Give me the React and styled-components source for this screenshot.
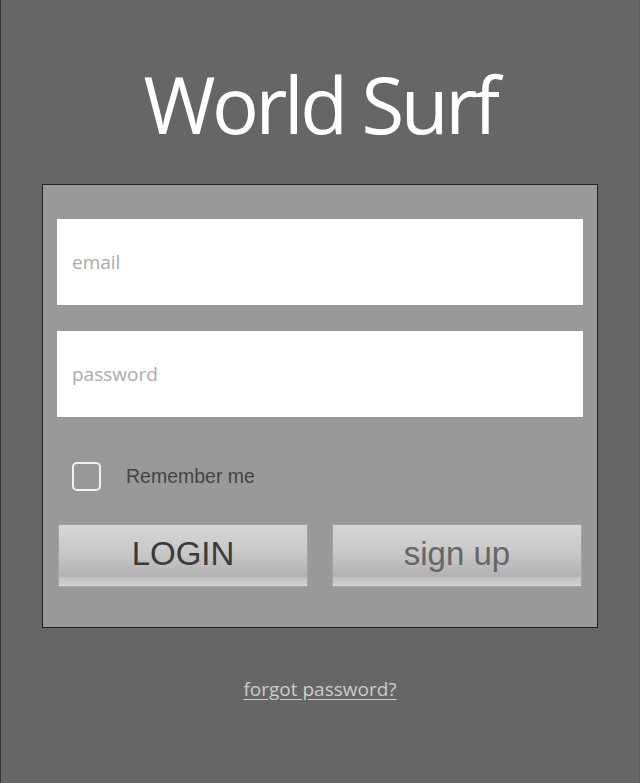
import React from 'react'
import styled, { createGlobalStyle } from 'styled-components'

const Global = createGlobalStyle`
  html, body {
    margin: 0;
    padding: 0;
    background: #666666;
  }
  * { box-sizing: border-box; }
`

const Page = styled.div`
  min-height: 783px;
  background: #666666;
  border-left: 1px solid #333333;
  border-right: 1px solid #5c5c5c;
  display: flex;
  flex-direction: column;
  align-items: center;
  padding-top: 65px;
`

const Title = styled.h1`
  margin: 0;
  font-family: "Open Sans", sans-serif;
  font-weight: 400;
  font-size: 78px;
  line-height: 78px;
  letter-spacing: -3.4px;
  color: #ffffff;
`

const Card = styled.div`
  margin-top: 41px;
  width: 556px;
  background: #999999;
  border: 1px solid #222222;
  padding: 34px 14px 40px;
  display: flex;
  flex-direction: column;
`

const Field = styled.input`
  display: block;
  width: 100%;
  height: 86px;
  border: none;
  outline: none;
  background: #ffffff;
  padding: 0 15px;
  font-family: "Open Sans", sans-serif;
  font-size: 19px;
  color: #555;
  margin-bottom: ${p => p.$gap || 0}px;

  &::placeholder {
    color: #ababab;
  }
`

const CheckRow = styled.label`
  display: flex;
  align-items: center;
  gap: 25px;
  margin: 45px 0 33px 15px;
  font-family: "Liberation Sans", Arial, sans-serif;
  font-size: 19.5px;
  color: #444444;
`

const Box = styled.span`
  width: 29px;
  height: 29px;
  border: 2px solid #f2f2f2;
  border-radius: 5px;
`

const Buttons = styled.div`
  display: grid;
  grid-template-columns: 1fr 1fr;
  gap: 24px;
  padding: 0 1px;
`

const Button = styled.button`
  height: 63px;
  border: 1px solid #a3a3a3;
  border-radius: 1px;
  background: linear-gradient(
    to bottom,
    #d6d6d6 0%,
    #c8c8c8 45%,
    #b2b2b2 84%,
    #c4c4c4 87%,
    #cbcbcb 96%,
    #d8d8d8 100%
  );
  font-family: "Liberation Sans", Arial, sans-serif;
  font-size: 33px;
  color: ${p => p.$color};
  cursor: pointer;
  padding: 0 0 4px;
`

const Forgot = styled.a`
  margin-top: 48px;
  font-family: "Open Sans", sans-serif;
  font-size: 19px;
  color: #cccccc;
  text-decoration: underline;
  text-underline-offset: 3px;
  cursor: pointer;
`

export default function App() {
  return (
    <Page>
      <Global />
      <Title>World Surf</Title>
      <Card>
        <Field type="email" placeholder="email" $gap={26} />
        <Field type="password" placeholder="password" />
        <CheckRow>
          <Box />
          Remember me
        </CheckRow>
        <Buttons>
          <Button $color="#3a3a3a">LOGIN</Button>
          <Button $color="#666666">sign up</Button>
        </Buttons>
      </Card>
      <Forgot>forgot password?</Forgot>
    </Page>
  )
}
